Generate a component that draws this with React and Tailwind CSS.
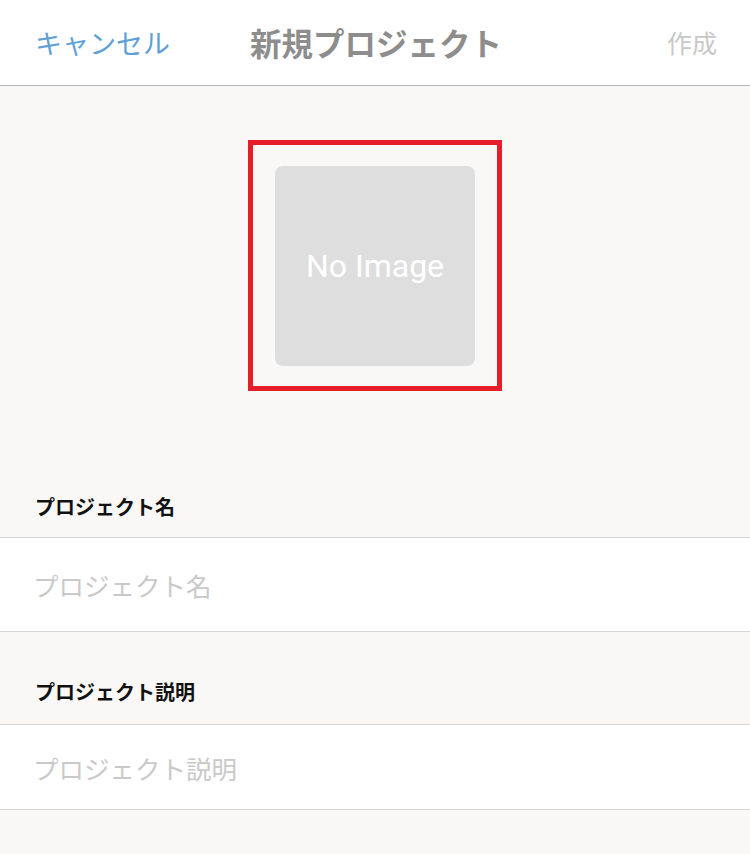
import React, { useState } from "react";

const font = { fontFamily: '"Noto Sans CJK JP", "Noto Sans", sans-serif' };

const Field = ({ label, placeholder, value, onChange, top, rowH }) => (
  <div>
    <div className={`flex items-end px-[35px] ${top}`}>
      <span className="text-[20px] font-bold text-[#111] leading-none">{label}</span>
    </div>
    <div className="bg-white border-y border-[#d6d6d6] px-[33px]">
      <input
        value={value}
        onChange={(e) => onChange(e.target.value)}
        placeholder={placeholder}
        className={`w-full text-[25.5px] text-[#333] placeholder:text-[#c9c9c9] outline-none bg-transparent ${rowH}`}
        style={font}
      />
    </div>
  </div>
);

export default function App() {
  const [name, setName] = useState("");
  const [desc, setDesc] = useState("");

  return (
    <div className="w-[750px] h-[854px] bg-[#f9f8f6] overflow-hidden" style={font}>
      {/* ヘッダー */}
      <div className="h-[86px] bg-white border-b border-[#b5b5b5] flex items-center justify-between px-[35px] pr-[33px]">
        <button className="text-[27px] text-[#5e9fd6] leading-none w-[200px] text-left">キャンセル</button>
        <h1 className="text-[31.5px] font-bold text-[#8d8d8d] leading-none">新規プロジェクト</h1>
        <button className="text-[25px] text-[#c8c8c8] leading-none w-[200px] text-right">作成</button>
      </div>

      {/* 画像 */}
      <div className="flex justify-center pt-[54px]">
        <div className="w-[254px] h-[251px] border-[5px] border-[#e51e2a] flex items-center justify-center">
          <div className="w-[200px] h-[200px] rounded-lg bg-[#dedede] flex items-center justify-center">
            <span className="text-white text-[32px]" style={{ fontFamily: "Roboto, sans-serif" }}>No Image</span>
          </div>
        </div>
      </div>

      <Field
        label="プロジェクト名"
        placeholder="プロジェクト名"
        value={name}
        onChange={setName}
        top="h-[146px] pb-[20px]"
        rowH="h-[93px]"
      />
      <Field
        label="プロジェクト説明"
        placeholder="プロジェクト説明"
        value={desc}
        onChange={setDesc}
        top="h-[92px] pb-[22px]"
        rowH="h-[84px]"
      />
    </div>
  );
}
